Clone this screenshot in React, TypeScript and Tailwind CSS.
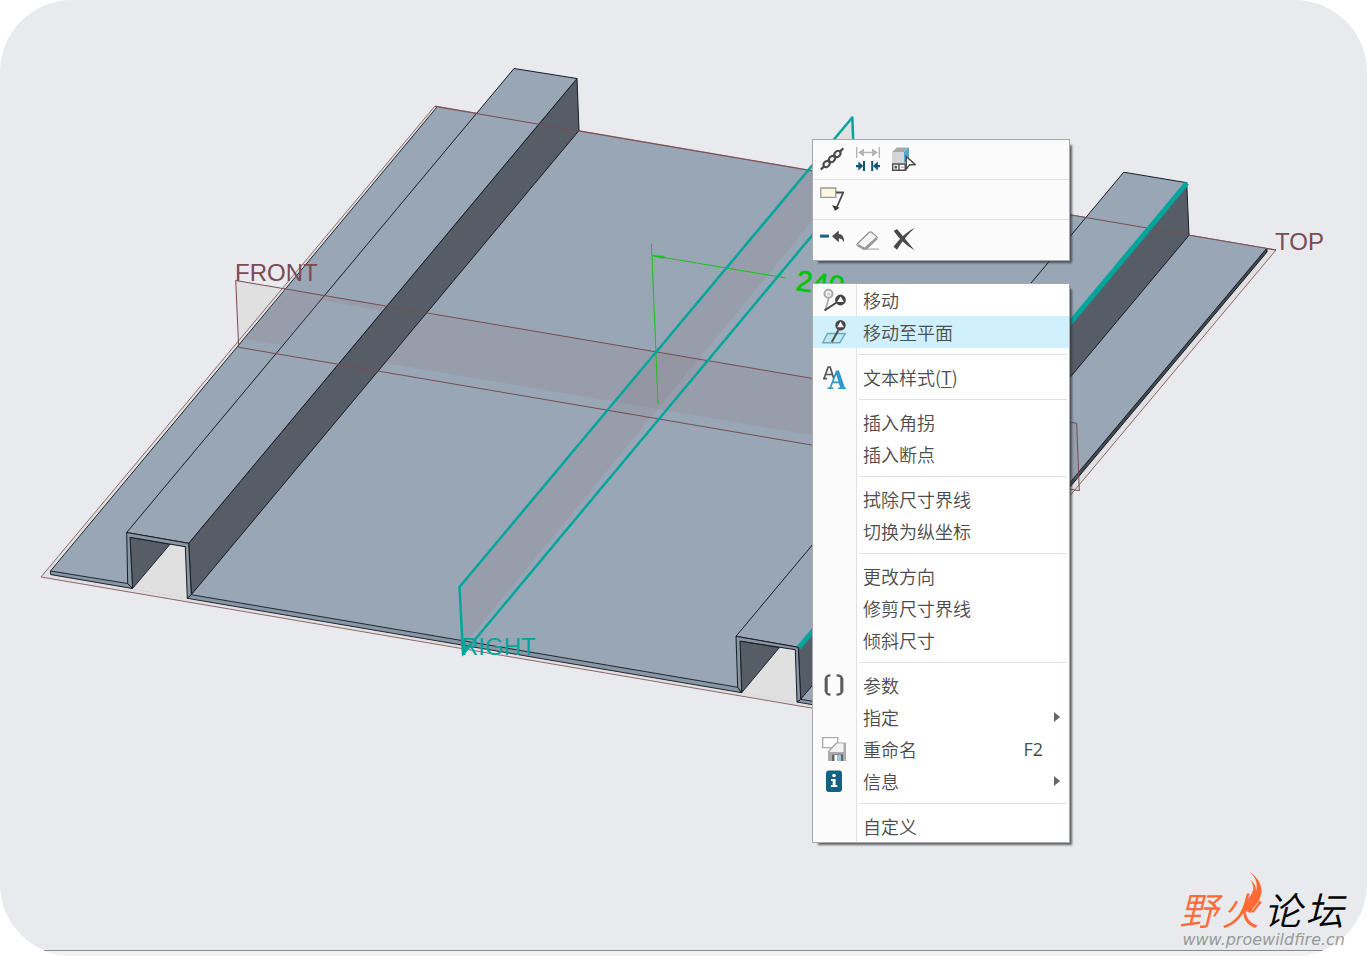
import React from "react";

const MenuIcons = {
  chain: (
    <svg viewBox="0 0 24 24" className="size-6" fill="none" stroke="#4a4a4a">
      <g transform="rotate(-43 12 12)" strokeWidth="2">
        <ellipse cx="4.6" cy="12" rx="3.3" ry="2.7" />
        <ellipse cx="12" cy="12" rx="3.3" ry="2.7" />
        <ellipse cx="19.4" cy="12" rx="3.3" ry="2.7" />
        <path d="M-3.5 12H1.5M22.5 12h5M7 12h2M15 12h2" strokeWidth="2.2" />
      </g>
    </svg>
  ),
  spacing: (
    <svg viewBox="0 0 24 24" className="size-6">
      <g fill="#b4b4b4">
        <path d="M0 0h1.4v11H0zM22.6 0H24v11h-1.4zM6 4.7h12v1.6H6z" />
        <path d="M2 5.5 8 1.5v8z" />
        <path d="M22 5.5 16 1.5v8z" />
      </g>
      <g fill="#0f5578">
        <path d="M7 14h2v10H7zM15.2 14h2v10h-2zM0 18h4v2.2H0zM20 18h4v2.2h-4z" />
        <path d="M7.2 19.1 2.4 14.6v9z" />
        <path d="M17 19.1l4.8-4.5v9z" />
      </g>
    </svg>
  ),
  model: (
    <svg viewBox="0 0 24 24" className="size-6">
      <path d="M0 5 5 .5h12L12 5z" fill="#a9a9a9" />
      <path d="M0 5h12v11H0z" fill="#d3d5d6" />
      <path d="M12 5 17 .5V12l-5 4z" fill="#4ba9d4" />
      <path d="M.7 17h12.5v6.3H.7zM7 17v6.3" fill="#fff" stroke="#4b4b4b" strokeWidth="1.4" />
      <path d="M2.8 19h2v2.2h-2zM8.8 20.2h3" fill="#555" stroke="#555" strokeWidth=".6" />
      <path d="M14.2 9.5v12.8l3.2-4.4 5.7-.4z" fill="#fff" stroke="#4b4b4b" strokeWidth="1.5" />
    </svg>
  ),
  leader: (
    <svg viewBox="0 0 24 24" className="size-6">
      <path d="M.8 1h15v9.3H.8z" fill="#fff8df" stroke="#999" strokeWidth="1.3" />
      <path d="M16 5.5h7.2L16.5 21" fill="none" stroke="#4d4d4d" strokeWidth="1.8" />
      <path d="m12 18 7.5 2.8-4.3 3z" fill="#333" />
    </svg>
  ),
  undo: (
    <svg viewBox="0 0 24 24" className="size-6">
      <path d="M0 7.6h9v3H0z" fill="#146586" />
      <path d="m12 9.3 6.8-5.8v3.6c3.7.3 5.5 3 5.2 8.4-1.5-3.4-2.8-4.1-5.2-4.1v3.8z" fill="#4c4c4c" />
    </svg>
  ),
  eraser: (
    <svg viewBox="0 0 24 24" className="size-6">
      <path d="M7 21.5h16v1.2H7z" fill="#aaa" />
      <path d="M1.5 16.5 13 5.5c1-.9 2-.9 3 0l4.5 3.8c1 .9 1 2 0 3L10.5 22H7l-5.3-3.2c-1-.6-1-1.4-.2-2.3z" fill="#f4f4f4" stroke="#8b8b8b" strokeWidth="1.1" />
      <path d="m2 17 6.5 3.5 12-10.8v2.5L10.5 22H7l-5.3-3.2z" fill="#999" />
    </svg>
  ),
  remove: (
    <svg viewBox="0 0 24 24" className="size-6">
      <path d="m1.8 4 3.2-2L22.5 23.2C14.5 18.5 7.5 12.5 1.8 4z" fill="#484848" />
      <path d="M22.5 1C14.5 5 7.5 11.5 1.6 19.8l3.4 3C9.8 15 15 8 22.5 1z" fill="#484848" />
    </svg>
  ),
  move: (
    <svg viewBox="0 0 24 24" className="size-6">
      <g stroke="#aaa" fill="none">
        <circle cx="6.5" cy="5.8" r="4" strokeWidth="2.1" />
        <path d="m7 9.5-3.8 13" strokeWidth="1.7" />
      </g>
      <path d="m6.5 3.4 2.4 3.8H4.1z" fill="#ccc" />
      <circle cx="18.5" cy="12" r="4.2" fill="#464646" stroke="#464646" strokeWidth="2.4" />
      <path d="m14.5 14.5-12 8" stroke="#464646" strokeWidth="2" />
      <path d="m18.5 8.4 3.4 5.6h-6.8z" fill="#fff" />
    </svg>
  ),
  movePlane: (
    <svg viewBox="0 0 24 24" className="size-6">
      <path d="M5.5 13.5h17.8l-5.5 9.3H.8z" fill="#bce9f4" stroke="#6aa9bd" strokeWidth="1.4" />
      <circle cx="18.5" cy="5.2" r="4.2" fill="#464646" stroke="#464646" strokeWidth="2" />
      <path d="M17 9 9.8 22" stroke="#505050" strokeWidth="2" />
      <path d="m18.5 1.6 3.4 5.6h-6.8z" fill="#fff" />
    </svg>
  ),
  textStyle: (
    <svg viewBox="0 0 24 24" className="size-6">
      <path d="M2 13.5 6.2 2h2l3.5 11.5M4 9.5h6M1 13.7h4" fill="none" stroke="#555" strokeWidth="1.7" />
      <path d="M5.5 22.5h2L14 5.5h3l5.8 17H24V24h-7.8v-1.5h2l-1.3-4.2h-6l-1.6 4.2h2V24H5.5zM11.6 16.5h4.8L14.3 9.8z" fill="#2f98c6" />
    </svg>
  ),
  brackets: (
    <svg viewBox="0 0 24 24" className="size-6" fill="none" stroke="#5b5b5b" strokeWidth="2.2">
      <path d="M8.5 2.4Q4 2.4 4 6v12q0 3.6 4.5 3.6M14.5 2.4Q20 2.4 20 6v12q0 3.6-5.5 3.6" />
      <path d="M4.2 5v14M19.8 5v14" strokeWidth="3" />
    </svg>
  ),
  rename: (
    <svg viewBox="0 0 24 24" className="size-6">
      <path d="M.7.7h15v10H.7z" fill="#fff" stroke="#aaa" strokeWidth="1.3" />
      <path d="m6 14 8-8.5h10V24H6z" fill="#aaa" />
      <path d="m8 14 7-7.5h6.5V15H8z" fill="#f3f3f3" />
      <path d="M10 17.5h11V24H10z" fill="#666" />
      <path d="M12.5 18h3v6h-3z" fill="#fff" />
      <path d="M16 18h3v6h-3z" fill="#8ed0ee" />
    </svg>
  ),
  info: (
    <svg viewBox="0 0 24 24" className="size-6">
      <rect x="4" y="1.5" width="16" height="21.5" rx="3" fill="#136183" />
      <circle cx="12" cy="6.5" r="1.8" fill="#fff" />
      <path d="M9 10h4.6v6.2h1.8v1.9H8.9v-1.9h1.8v-4.3H9z" fill="#fff" />
    </svg>
  ),
};

type IconName = keyof typeof MenuIcons;

const toolbarRows: { icon: IconName; label: string }[][] = [
  [
    { icon: "chain", label: "链" },
    { icon: "spacing", label: "间距" },
    { icon: "model", label: "选择模型" },
  ],
  [{ icon: "leader", label: "引线" }],
  [
    { icon: "undo", label: "撤销" },
    { icon: "eraser", label: "拭除" },
    { icon: "remove", label: "删除" },
  ],
];

interface Item {
  label: React.ReactNode;
  icon?: IconName;
  active?: boolean;
  shortcut?: string;
  submenu?: boolean;
}

const menuGroups: Item[][] = [
  [
    { label: "移动", icon: "move" },
    { label: "移动至平面", icon: "movePlane", active: true },
  ],
  [{ label: <>文本样式(<u className="underline-offset-2">T</u>)</>, icon: "textStyle" }],
  [{ label: "插入角拐" }, { label: "插入断点" }],
  [{ label: "拭除尺寸界线" }, { label: "切换为纵坐标" }],
  [{ label: "更改方向" }, { label: "修剪尺寸界线" }, { label: "倾斜尺寸" }],
  [
    { label: "参数", icon: "brackets" },
    { label: "指定", submenu: true },
    { label: "重命名", icon: "rename", shortcut: "F2" },
    { label: "信息", icon: "info", submenu: true },
  ],
  [{ label: "自定义" }],
];

function MiniToolbar() {
  return (
    <div
      role="toolbar"
      className="w-full divide-y divide-[#e2e2e2] border border-[#a9a9a9] bg-[#fbfbfb] shadow-[4px_4px_2px_-2px_rgba(50,55,62,0.75)]"
    >
      {toolbarRows.map((row, i) => (
        <div key={i} className="flex h-10 items-center gap-3 px-[7px] pb-0.5">
          {row.map((tool) => (
            <button key={tool.icon} type="button" aria-label={tool.label}>
              {MenuIcons[tool.icon]}
            </button>
          ))}
        </div>
      ))}
    </div>
  );
}

function MenuRow({ item }: { item: Item }) {
  return (
    <button
      type="button"
      role="menuitem"
      className={`flex h-8 w-full items-center text-left ${item.active ? "bg-[#d1f0fd]" : ""}`}
    >
      <span
        className={`flex h-8 w-11 shrink-0 items-center border-r pl-[9px] ${
          item.active ? "border-[#d1f0fd]" : "border-[#e2e2e2] bg-[#fbfbfb]"
        }`}
      >
        {item.icon && MenuIcons[item.icon]}
      </span>
      <span className="flex-1 pl-1.5">{item.label}</span>
      {item.shortcut && (
        <span className="pr-[26px] font-['Open_Sans',sans-serif] font-normal">{item.shortcut}</span>
      )}
      {item.submenu && (
        <svg viewBox="0 0 6 12" className="mr-[9px] h-3 w-1.5">
          <path d="M0 1v10l6-5z" fill="#666" />
        </svg>
      )}
    </button>
  );
}

function ContextMenu() {
  return (
    <div
      role="menu"
      className="w-full border border-[#a9a9a9] bg-white text-lg leading-8 font-[350] text-[#4c4c4c] shadow-[4px_4px_2px_-2px_rgba(50,55,62,0.75)]"
    >
      {menuGroups.map((group, i) => (
        <React.Fragment key={i}>
          {i > 0 && (
            <div role="separator" className="flex h-[13px] items-center">
              <span className="h-full w-11 border-r border-[#e2e2e2] bg-[#fbfbfb]" />
              <span className="mr-0.5 ml-0.5 h-px flex-1 bg-[#e0e0e0]" />
            </div>
          )}
          {group.map((item, j) => (
            <MenuRow key={j} item={item} />
          ))}
        </React.Fragment>
      ))}
    </div>
  );
}

function ModelView() {
  return (
    <svg viewBox="0 0 1367 950" className="w-full" role="img" aria-label="TOP FRONT RIGHT">
      {/* datum plane backs */}
      <g fill="#e0e0e1">
        <path d="M41 577 435 106 1276 250 882 720z" />
        <path d="M236 280.5 1077 423 1079 490 238.5 347z" />
        <path d="M459 587 852 117 855 184 463 654z" />
      </g>
      <path d="M41 577 435 106 1276 250 882 720z" fill="none" stroke="#8d666b" strokeWidth="1" />

      {/* base sheet */}
      <path d="M50.5 571 437 107 1267 248 878 711 878 716 50.5 575z" fill="#99a6b5" />
      <path d="M1267 248v4L878 716v-5z" fill="#454b54" stroke="#111820" strokeWidth="1" />
      <path d="M50.5 571 437 107" stroke="#20272e" fill="none" />

      {/* front thickness */}
      <path d="M50.5 571 127.7 583.5 132.5 588.5 50.5 574.5zM191.3 594.7 738 687.3 741.7 692.7 187.3 598.3zM800.7 699.3 878 712v4l-81-14z" fill="#8996a5" stroke="#20272e" />

      {/* openings below the channels */}
      <path d="M130 537 186 547 187.3 598.5 132.5 589zM740 641 796 650 797 702.5 741.7 693z" fill="#e0e0e1" />
      <path d="M130 537.3 170 544.3 132.5 588.5zM740 641 779.3 647.7 741.7 692.7z" fill="#575d67" stroke="#20272e" />

      {/* channel tops and side walls */}
      <g stroke="#171c22" strokeWidth="1">
        <path d="M188.7 543.3 577 78.5 579 130.5 191.3 594.7zM798.3 647.3 1186.7 182.7 1189 235.3 800.7 699.3z" fill="#575d67" />
        <path d="M126.7 532.5 514 68.5 577 78.5 188.7 543.3zM736 636.3 1123.7 172.2 1186.7 182.7 798.3 647.3z" fill="#99a6b5" />
        <path
          d="M126.7 532.5 188.7 543.3 191.3 594.7 187.3 598.3 185.3 546.7 130 537.3 132.5 588.5 127.7 583.5zM736 636.3 798.3 647.3 800.7 699.3 797 702 795.3 649.7 740 641 741.7 692.7 737.7 687.3z"
          fill="#8996a5"
        />
      </g>

      {/* translucent datum planes */}
      <g fill="#8f7e88" fillOpacity="0.2">
        <path d="M288 289 387 306 383 311 322 300 283 345 244 339z" />
        <path d="M427 313 1077 423 1078 480 385 363z" />
        <path d="M459 587 811 166 849 172 790 248 463 646z" />
      </g>

      <g fill="none" stroke="#7a4b52" strokeWidth="1">
        <path d="M435 106.5 1276 250" />
        <path d="M235.7 280.5 1076.7 423.3 1079.3 490.7 238.7 347.3z" />
      </g>

      {/* dimension */}
      <g stroke="#19c319" fill="#19c319">
        <path d="M651.5 243.5 658 404M652 255.5 786 278" strokeWidth="1" />
        <path d="M653 255.8 664.5 256 663 258.7z" strokeWidth="0.5" />
      </g>
      <text
        x="795"
        y="290"
        transform="rotate(8 795 290)"
        className="font-['Liberation_Sans',sans-serif] text-[29px]"
        fill="#00c400"
        stroke="#00c400"
        strokeWidth="0.6"
      >
        240
      </text>

      {/* selected datum plane and edge */}
      <path d="M459.5 587 852.3 117.5 855 184 463 654z" fill="none" stroke="#00a69c" strokeWidth="2.5" strokeLinejoin="round" />
      <path d="m463 640 .5 13 7-8" fill="none" stroke="#00a69c" strokeWidth="3" />
      <path d="M799 647.5 1187 183" fill="none" stroke="#00a69c" strokeWidth="5" />

      <g className="font-['Liberation_Sans',sans-serif] text-2xl">
        <text x="235" y="281" fill="#7a4b52">FRONT</text>
        <text x="1275" y="250" fill="#7a4b52">TOP</text>
        <text x="461" y="655" fill="#00a69c">RIGHT</text>
      </g>
    </svg>
  );
}

function ForumLogo() {
  return (
    <a href="#forum" className="block">
      <span className="relative flex gap-1 text-[38px] leading-[42px] font-[350] text-black italic">
        <span className="text-[#ff6a36]">野</span>
        <span className="text-[#ff6a36]">火</span>
        <span>论</span>
        <span>坛</span>
        <svg viewBox="0 0 20 44" className="absolute -top-4 left-[64px] h-11 w-5" fill="#ff6a36">
          <path d="M7 0c10 7 14 17 10 26-2 6-7 8-9 15l-6-2c-2-5 1-9 4-13 5-7 6-12 1-18 5 3 6 7 6 11 2-7 0-13-6-19z" />
        </svg>
      </span>
      <span className="block pt-0.5 pl-[3px] font-['DejaVu_Sans',sans-serif] text-base leading-4 text-[#999] italic">
        www.proewildfire.cn
      </span>
    </a>
  );
}

export default function App() {
  return (
    <main className="min-h-screen bg-white font-['Noto_Sans_CJK_SC',sans-serif]">
      <section className="relative overflow-hidden rounded-[72px] bg-[#e8eaee]">
        <ModelView />
        <div className="h-1.5 border-t border-[#888] bg-[#f2f2f2]" />
        <div className="absolute top-[139px] left-[812px] flex w-[258px] flex-col gap-[22px]">
          <MiniToolbar />
          <ContextMenu />
        </div>
      </section>
      <div className="absolute top-[888px] right-[22px]">
        <ForumLogo />
      </div>
    </main>
  );
}
